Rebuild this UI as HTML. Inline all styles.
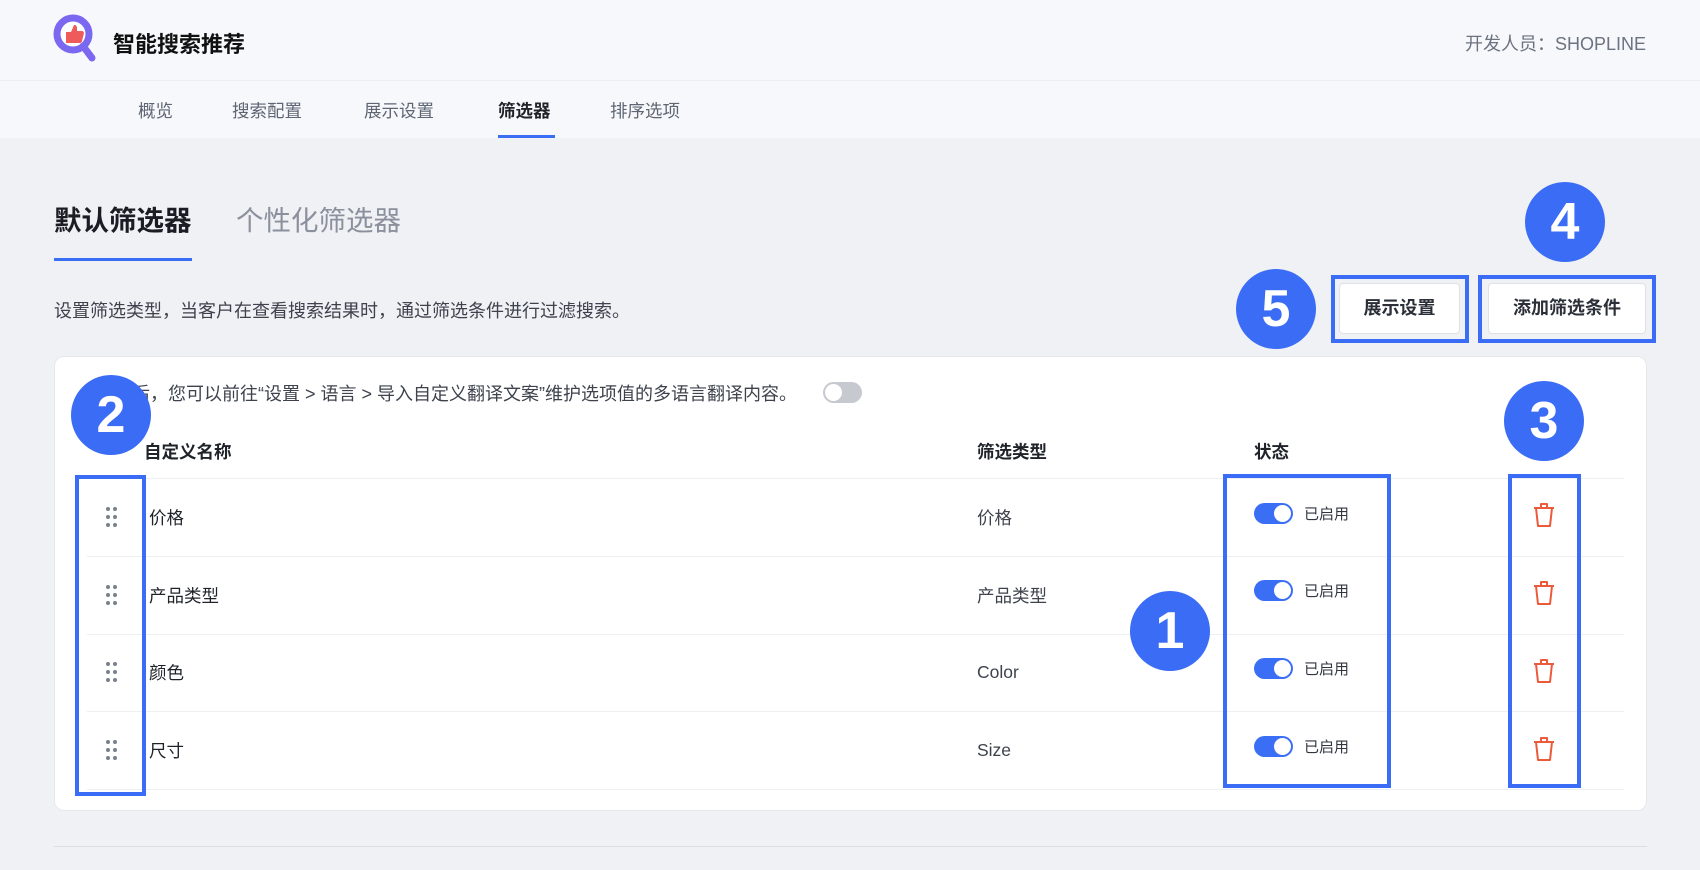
<!DOCTYPE html>
<html><head><meta charset="utf-8"><style>
*{margin:0;padding:0;box-sizing:border-box}
body{width:1700px;height:870px;background:#f0f1f5;font-family:"Liberation Sans","Noto Sans CJK SC",sans-serif;position:relative;overflow:hidden;color:#1f2329}
.abs{position:absolute;white-space:nowrap}
.hdr{position:absolute;left:0;top:0;width:1700px;height:81px;background:#f7f8fb;border-bottom:1px solid #eceef2}
.nav{position:absolute;left:0;top:81px;width:1700px;height:57px;background:#f7f8fb}
.navi{position:absolute;top:98px;font-size:17.5px;color:#5e6573}
.card{position:absolute;left:54px;top:356px;width:1593px;height:455px;background:#fff;border-radius:10px;border:1px solid #e6e8ec}
.line{position:absolute;left:87px;width:1537px;height:1px;background:#eeeff2}
.t{position:absolute;font-size:17.5px;color:#1f2329;white-space:nowrap}
.sw{position:absolute;width:39px;height:21px;border-radius:11px;background:#3a6ef5}
.sw:after{content:"";position:absolute;right:2px;top:2px;width:17px;height:17px;border-radius:50%;background:#fff}
.lbl{position:absolute;font-size:15px;color:#303540}
.frame{position:absolute;border:4px solid #3a6cf6}
.num{position:absolute;width:80px;height:80px;border-radius:50%;background:#3a6cf6;color:#fff;font-size:52px;font-weight:bold;text-align:center;line-height:80px;font-family:"Liberation Sans",sans-serif}
.btn{position:absolute;top:283px;height:51px;background:#fff;border:1px solid #dfe1e6;border-radius:4px;font-size:18px;font-weight:bold;color:#2a2f38;text-align:center;line-height:49px}
</style></head><body>
<div class="hdr"></div>
<svg class="abs" style="left:50px;top:12px" width="50" height="56" viewBox="0 0 50 56">
<circle cx="23" cy="22" r="16" fill="#fff" stroke="#7b68f0" stroke-width="7"/>
<line x1="33" y1="34" x2="42" y2="46" stroke="#7b68f0" stroke-width="7" stroke-linecap="round"/>
<path d="M16 20h5l3-7c2 0 3 1 3 3v3h5c1 0 2 1 2 2l-2 8c0 1-1 2-2 2H16z" fill="#ef5b5b"/>
</svg>
<div class="abs" style="left:113px;top:27px;font-size:22px;font-weight:bold;color:#111">智能搜索推荐</div>
<div class="abs" style="right:54px;top:30px;font-size:18px;color:#6b7280">开发人员：SHOPLINE</div>
<div class="nav"></div>
<div class="navi" style="left:138px">概览</div>
<div class="navi" style="left:232px">搜索配置</div>
<div class="navi" style="left:364px">展示设置</div>
<div class="navi" style="left:498px;color:#1f2329;font-weight:bold">筛选器</div>
<div class="navi" style="left:610px">排序选项</div>
<div class="abs" style="left:498px;top:135px;width:57px;height:3px;background:#3a6ef5"></div>

<div class="abs" style="left:54px;top:198px;font-size:27.5px;font-weight:bold;color:#1a1d24">默认筛选器</div>
<div class="abs" style="left:236px;top:198px;font-size:27.5px;color:#8a909c">个性化筛选器</div>
<div class="abs" style="left:54px;top:258px;width:138px;height:3px;background:#3a6ef5"></div>
<div class="abs" style="left:54px;top:297px;font-size:18px;color:#3d424c">设置筛选类型，当客户在查看搜索结果时，通过筛选条件进行过滤搜索。</div>

<div class="btn" style="left:1339px;width:121px">展示设置</div>
<div class="btn" style="left:1488px;width:158px">添加筛选条件</div>

<div class="card"></div>
<div class="abs" style="left:132px;top:380px;font-size:18px;color:#3d424c">后，您可以前往“设置 &gt; 语言 &gt; 导入自定义翻译文案”维护选项值的多语言翻译内容。</div>
<div class="abs" style="left:823px;top:382px;width:39px;height:21px;border-radius:11px;background:#c6c9d0"><div style="position:absolute;left:2px;top:2px;width:17px;height:17px;border-radius:50%;background:#fff"></div></div>

<div class="t" style="left:144px;top:439px;font-weight:bold">自定义名称</div>
<div class="t" style="left:977px;top:439px;font-weight:bold">筛选类型</div>
<div class="t" style="left:1254px;top:439px;font-weight:bold">状态</div>
<div class="line" style="top:478px"></div>
<div class="line" style="top:556px"></div>
<div class="line" style="top:634px"></div>
<div class="line" style="top:711px"></div>
<div class="line" style="top:789px"></div>

<div class="t" style="left:149px;top:505px">价格</div><div class="t" style="left:977px;top:505px;color:#3d424c">价格</div>
<div class="t" style="left:149px;top:583px">产品类型</div><div class="t" style="left:977px;top:583px;color:#3d424c">产品类型</div>
<div class="t" style="left:149px;top:660px">颜色</div><div class="t" style="left:977px;top:662px;color:#3d424c">Color</div>
<div class="t" style="left:149px;top:738px">尺寸</div><div class="t" style="left:977px;top:740px;color:#3d424c">Size</div>

<div class="sw" style="left:1254px;top:503px"></div><div class="lbl" style="left:1304px;top:503px">已启用</div>
<div class="sw" style="left:1254px;top:580px"></div><div class="lbl" style="left:1304px;top:580px">已启用</div>
<div class="sw" style="left:1254px;top:658px"></div><div class="lbl" style="left:1304px;top:658px">已启用</div>
<div class="sw" style="left:1254px;top:736px"></div><div class="lbl" style="left:1304px;top:736px">已启用</div>

<svg class="abs" style="left:0;top:0" width="1700" height="870">
<defs>
<g id="d" fill="#7a808c"><circle cx="2" cy="2" r="2"/><circle cx="9" cy="2" r="2"/><circle cx="2" cy="10" r="2"/><circle cx="9" cy="10" r="2"/><circle cx="2" cy="18" r="2"/><circle cx="9" cy="18" r="2"/></g>
<g id="tr" fill="none" stroke="#ec5a3c" stroke-width="2" stroke-linejoin="round"><path d="M0 4h20M7 4V0h6v4M2 4l2 18h12l2-18"/></g>
</defs>
<use href="#d" x="106" y="507"/><use href="#d" x="106" y="585"/><use href="#d" x="106" y="662"/><use href="#d" x="106" y="740"/>
<use href="#tr" x="1534" y="504"/><use href="#tr" x="1534" y="582"/><use href="#tr" x="1534" y="660"/><use href="#tr" x="1534" y="738"/>
</svg>

<div class="abs" style="left:54px;top:846px;width:1593px;height:1px;background:#dcdee3"></div>

<div class="frame" style="left:1331px;top:275px;width:138px;height:68px"></div>
<div class="frame" style="left:1478px;top:275px;width:178px;height:68px"></div>
<div class="frame" style="left:75px;top:475px;width:71px;height:321px"></div>
<div class="frame" style="left:1223px;top:474px;width:168px;height:314px"></div>
<div class="frame" style="left:1508px;top:474px;width:73px;height:314px"></div>

<div class="num" style="left:1236px;top:269px">5</div>
<div class="num" style="left:1525px;top:182px">4</div>
<div class="num" style="left:1504px;top:381px">3</div>
<div class="num" style="left:71px;top:375px">2</div>
<div class="num" style="left:1130px;top:591px">1</div>
</body></html>
